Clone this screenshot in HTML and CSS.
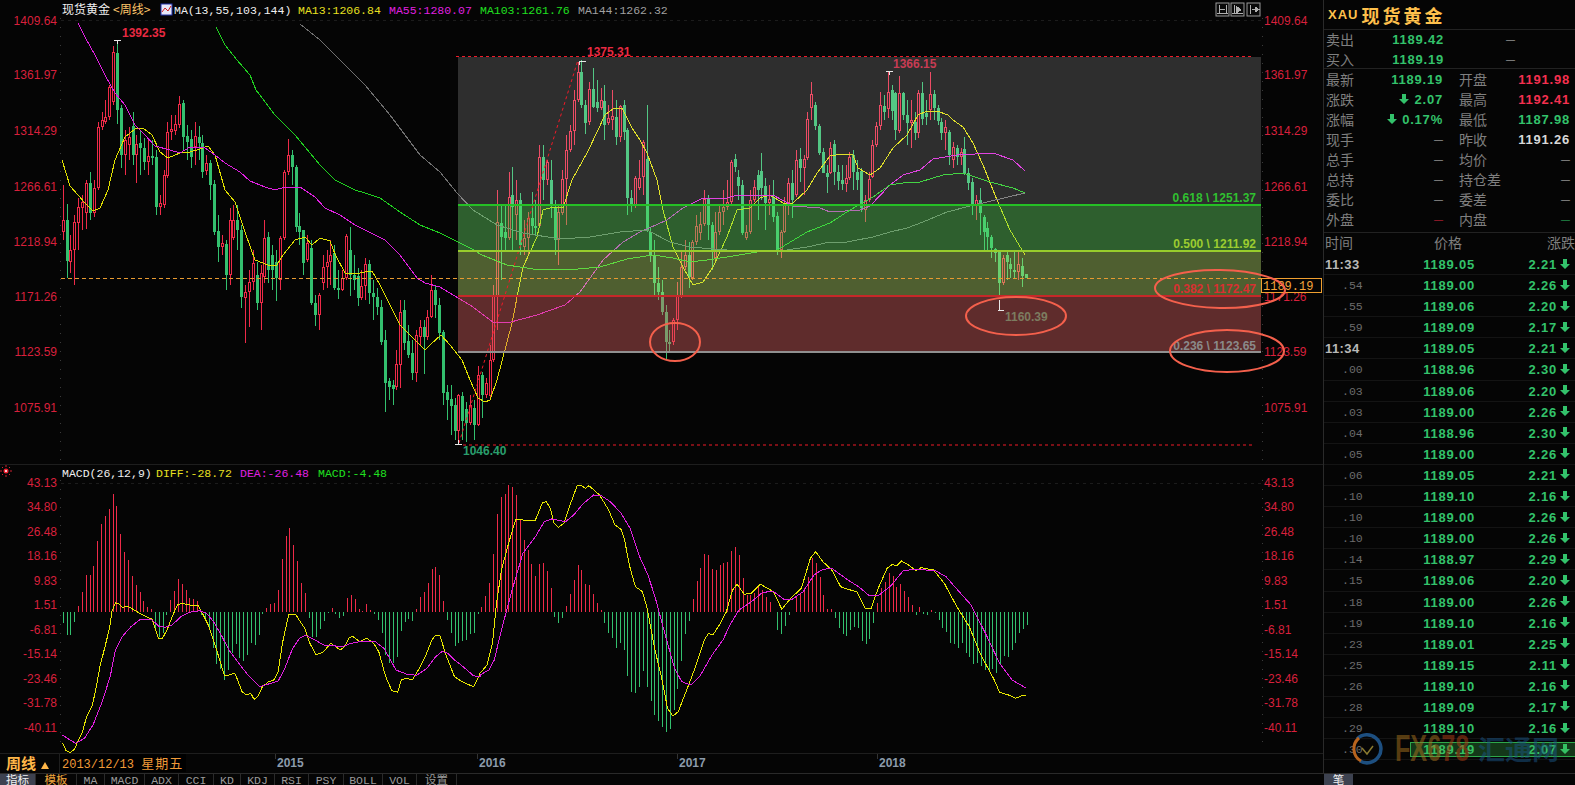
FILE: index.html
```html
<!DOCTYPE html>
<html lang="en">
<head>
  <meta charset="UTF-8" />
  <title>现货黄金 周线</title>
  <link rel="stylesheet" href="styles.css">
</head>
<body>
  <div class="top">
    <div class="charts">
      <svg class="plot" id="plot" width="1323" height="753" viewBox="0 0 1323 753">
        <!-- panel header -->
        <text class="hd cjk white" x="62" y="14">现货黄金</text>
        <text class="hd cjk gold" x="113" y="14">&lt;周线&gt;</text>
        <rect x="161" y="4" width="11" height="11" fill="#e8e8f8" stroke="#2233aa"/>
        <path d="M162 12 L165 8 L168 11 L171 6" fill="none" stroke="#d02020"/>
        <text class="hd white" x="174" y="14">MA(13,55,103,144)</text>
        <text class="hd yellow" x="298" y="14">MA13:1206.84</text>
        <text class="hd magenta" x="389" y="14">MA55:1280.07</text>
        <text class="hd green" x="480" y="14">MA103:1261.76</text>
        <text class="hd gray" x="578" y="14">MA144:1262.32</text>

        <!-- filled by chart.js -->
        <g id="grid"></g>
        <g id="candles"></g>
        <g id="lines"></g>

        <!-- fib bands lie over the candles -->
        <rect class="band-top" x="458" y="57" width="803" height="147"/>
        <rect class="band-618" x="458" y="205" width="803" height="46"/>
        <rect class="band-500" x="458" y="251" width="803" height="45"/>
        <rect class="band-382" x="458" y="296" width="803" height="55"/>
        <path class="dash-red" d="M456 56.5 H1254 M463 445 H1254"/>
        <path class="dash-red" d="M459 443 L578 60"/>
        <path class="dash-orange" d="M61 278.5 H1261"/>
        <path class="fib l618" d="M458 204.5 H1261"/>
        <path class="fib l500" d="M458 251 H1261"/>
        <path class="fib l382" d="M458 295.5 H1261"/>
        <path class="fib l236" d="M458 351.5 H1261"/>

        <text class="fibtext c618" x="1256" y="202" text-anchor="end">0.618 \ 1251.37</text>
        <text class="fibtext c500" x="1256" y="248" text-anchor="end">0.500 \ 1211.92</text>
        <text class="fibtext c382" x="1256" y="293" text-anchor="end">0.382 \ 1172.47</text>
        <text class="fibtext c236" x="1256" y="350" text-anchor="end">0.236 \ 1123.65</text>

        <path class="cross" d="M114 40.5 H121 M117.5 40 V44 M579 61.5 H586 M579.5 61 V65 M886 71.5 H893 M889.5 71 V75 M998 310.5 H1004 M999.5 300 V311 M455 444.5 H462 M458.5 440 V445"/>
        <text class="peak red" x="122" y="37">1392.35</text>
        <text class="peak red" x="587" y="56">1375.31</text>
        <text class="peak rose" x="893" y="68">1366.15</text>
        <text class="peak olive" x="1005" y="321">1160.39</text>
        <text class="peak teal" x="463" y="455">1046.40</text>

        <path class="sep" d="M0 464.5 H1323"/>
        <circle cx="6" cy="471" r="2.5" fill="#f02030"/>
        <circle cx="6" cy="471" r="1" fill="#fff"/>
        <path d="M6 465 V467 M6 475 V477 M0 471 H2 M10 471 H12 M2 467 L3 468 M10 467 L9 468 M2 475 L3 474 M10 475 L9 474" stroke="#d02030" fill="none"/>
        <text class="hd white" x="62" y="477">MACD(26,12,9)</text>
        <text class="hd yellow" x="156" y="477">DIFF:-28.72</text>
        <text class="hd magenta" x="240" y="477">DEA:-26.48</text>
        <text class="hd green" x="318" y="477">MACD:-4.48</text>

        <rect class="last-box" x="1261.5" y="278.5" width="60" height="14"/>
        <text class="hd orange" x="1263" y="290">1189.19</text>

        <g id="ellipses" class="ring">
          <ellipse cx="675" cy="342" rx="25" ry="19"/>
          <ellipse cx="1016" cy="316" rx="50" ry="19"/>
          <ellipse cx="1220" cy="289" rx="65" ry="19" transform="rotate(1 1220 289)"/>
          <ellipse cx="1227" cy="351" rx="57" ry="21"/>
        </g>

        <!-- toolbar glyphs -->
        <g class="tool">
          <rect x="1216" y="3" width="13" height="13"/>
          <path d="M1219 5 V14 M1226 5 V14 M1217 13 H1228 M1220 9 H1225"/>
          <rect x="1231" y="3" width="13" height="13"/>
          <path d="M1234 5 V14 M1232 13 H1243"/>
          <path class="solid" d="M1236 6 L1241 10 L1236 13 Z"/>
          <rect x="1247" y="3" width="13" height="13"/>
          <path d="M1250 5 V14 M1252 9 H1258"/>
          <path class="solid" d="M1255 7 L1259 9.5 L1255 12 Z"/>
        </g>
      </svg>

      <div class="timebar">
        <div class="period">周线<span class="tri"></span></div>
        <div class="date"><span class="date-text">2013/12/13 <span class="cjk">星期五</span></span></div>
        <div class="year y2015">2015</div>
        <div class="year">2016</div>
        <div class="year">2017</div>
        <div class="year">2018</div>
      </div>
    </div>

    <aside class="side">
      <div class="title"><span class="sym">XAU</span><span class="name">现货黄金</span></div>

      <div class="book">
        <div class="book-row"><span class="lbl">卖出</span><span class="num up-g">1189.42</span><span class="dash wide">—</span></div>
        <div class="book-row"><span class="lbl">买入</span><span class="num up-g">1189.19</span><span class="dash wide">—</span></div>
      </div>

      <div class="quote">
        <span class="lbl">最新</span><span class="num up-g">1189.19</span><span class="lbl">开盘</span><span class="num red-n">1191.98</span>
        <span class="lbl">涨跌</span><span class="num up-g"><svg class="arr" viewBox="0 0 10 10"><path d="M3 0H7V5H10L5 10L0 5H3Z"/></svg> 2.07</span><span class="lbl">最高</span><span class="num red-n">1192.41</span>
        <span class="lbl">涨幅</span><span class="num up-g"><svg class="arr" viewBox="0 0 10 10"><path d="M3 0H7V5H10L5 10L0 5H3Z"/></svg> 0.17%</span><span class="lbl">最低</span><span class="num up-g">1187.98</span>
        <span class="lbl">现手</span><span class="dash">—</span><span class="lbl">昨收</span><span class="num white-n">1191.26</span>
        <span class="lbl">总手</span><span class="dash">—</span><span class="lbl">均价</span><span class="dash">—</span>
        <span class="lbl">总持</span><span class="dash">—</span><span class="lbl">持仓差</span><span class="dash">—</span>
        <span class="lbl">委比</span><span class="dash">—</span><span class="lbl">委差</span><span class="dash">—</span>
        <span class="lbl">外盘</span><span class="dash d-red">—</span><span class="lbl">内盘</span><span class="dash d-green">—</span>
      </div>

      <div class="ticks-head"><span class="lbl">时间</span><span class="lbl mid">价格</span><span class="lbl end">涨跌</span></div>
      <div class="ticks" id="ticks"></div>
    </aside>
  </div>

  <div class="tabs">
    <div class="tab tab-on">指标</div>
    <div class="tab tab-gold">模板</div>
    <div class="tab">MA</div>
    <div class="tab">MACD</div>
    <div class="tab">ADX</div>
    <div class="tab">CCI</div>
    <div class="tab">KD</div>
    <div class="tab">KDJ</div>
    <div class="tab">RSI</div>
    <div class="tab">PSY</div>
    <div class="tab">BOLL</div>
    <div class="tab">VOL</div>
    <div class="tab">设置</div>
    <div class="tab-space"></div>
    <div class="tab tab-on tab-side">笔</div>
  </div>

  <div class="watermark">
    <svg class="wm-logo" viewBox="0 0 32 32" width="32" height="32">
      <path d="M6 6 A14 14 0 1 1 9 28" fill="none" stroke="#1d4f80" stroke-width="3.5"/>
      <path d="M8 5 A14 14 0 0 0 10 28" fill="none" stroke="#b8641e" stroke-width="3"/>
      <path d="M11 15 L16 21 L22 13" fill="none" stroke="#8a7a30" stroke-width="1.5"/>
    </svg>
    <span class="wm-fx"><span class="wm-a">FX6</span><span class="wm-b">78</span></span>
    <span class="wm-cn">汇通网</span>
  </div>

  <script src="chart.js"></script>
</body>
</html>
```

FILE: styles.css
```css
* {
  box-sizing: border-box;
}

html, body {
  margin: 0;
  padding: 0;
  height: 785px;
  overflow: hidden;
  background: #050505;
}

body {
  font-family: "Liberation Sans", "Noto Sans CJK SC", sans-serif;
  color: #ccc;
  position: relative;
}

.top {
  display: flex;
  height: 773px;
}

.charts {
  width: 1323px;
  flex: none;
}

.plot {
  display: block;
}

/* chart header text */
.hd {
  font-family: "Liberation Mono", "Noto Sans CJK SC", monospace;
  font-size: 11.5px;
}

.cjk {
  font-family: "Noto Sans CJK SC", sans-serif;
  font-size: 12px;
}

.white { fill: #f0f0f0; }
.gold { fill: #ffc66a; }
.yellow { fill: #e8e020; }
.magenta { fill: #e020e0; }
.green { fill: #20e020; }
.gray { fill: #a0a0a0; }
.orange { fill: #f6a53c; font-size: 12px; }

.axis {
  font-size: 12px;
  fill: #d8203c;
}

.axis-line {
  stroke: #3a3a3a;
  stroke-dasharray: 1 8;
  fill: none;
}

.grid-line {
  stroke: #1c1c1c;
  stroke-dasharray: 3 4;
  fill: none;
}

.sep {
  stroke: #1e1e1e;
  fill: none;
}

.wick, .body {
  shape-rendering: crispEdges;
}

.ma {
  fill: none;
  stroke-width: 1;
  shape-rendering: crispEdges;
}

.band-top { fill: rgba(233, 233, 233, 0.18); }
.band-618 { fill: rgba(107, 230, 107, 0.4); }
.band-500 { fill: rgba(190, 230, 112, 0.4); }
.band-382 { fill: rgba(230, 102, 102, 0.4); }

.dash-red {
  stroke: #f01a28;
  stroke-dasharray: 3 3;
  fill: none;
}

.dash-orange {
  stroke: #e89a30;
  stroke-dasharray: 4 3;
  fill: none;
}

.fib {
  stroke-width: 2;
  fill: none;
  shape-rendering: crispEdges;
}

.l618 { stroke: #25c025; }
.l500 { stroke: #98cc2c; }
.l382 { stroke: #c62828; }
.l236 { stroke: #909090; }

.fibtext {
  font-size: 12px;
  font-weight: bold;
}

.c618 { fill: #30c030; }
.c500 { fill: #9ccc30; }
.c382 { fill: #d83030; }
.c236 { fill: #8a8a8a; }

.cross {
  stroke: #e8e8e8;
  fill: none;
  shape-rendering: crispEdges;
}

.peak {
  font-size: 12px;
  font-weight: bold;
}

.peak.red { fill: #e82a42; }
.peak.rose { fill: #c83c54; }
.peak.olive { fill: #7c7c60; }
.peak.teal { fill: #2a9e6c; }

.ring ellipse {
  fill: none;
  stroke: #f4604c;
  stroke-width: 2;
}

.last-box {
  fill: #050505;
  stroke: #f0a030;
}

.tool rect {
  fill: #0a0a0a;
  stroke: #9a9a9a;
}

.tool path {
  stroke: #b0b0b0;
  fill: none;
  shape-rendering: crispEdges;
}

.tool path.solid {
  fill: #b0b0b0;
}

/* bar under the charts */
.timebar {
  display: flex;
  height: 20px;
  border-top: 1px solid #1e1e1e;
}

.period {
  width: 60px;
  flex: none;
  padding-left: 6px;
  font-size: 15px;
  font-weight: bold;
  line-height: 18px;
  color: #ffb648;
  border-right: 1px solid #1e1e1e;
  font-family: "Noto Sans CJK SC", sans-serif;
}

.tri {
  display: inline-block;
  margin-left: 5px;
  border-left: 4px solid transparent;
  border-right: 4px solid transparent;
  border-bottom: 7px solid #ffb648;
}

.date {
  width: 215px;
  flex: none;
}

.date-text {
  display: inline-block;
  height: 18px;
  padding: 0 3px 0 2px;
  background: #000;
  font-family: "Liberation Mono", monospace;
  font-size: 12px;
  line-height: 18px;
  color: #f09a38;
}

.date-text .cjk {
  font-size: 13px;
  letter-spacing: 1px;
}

.year {
  width: 200px;
  flex: none;
  padding: 2px 0 0 2px;
  font-size: 12px;
  font-weight: bold;
  color: #8c9bab;
  background: linear-gradient(#333, #333) left top / 1px 5px no-repeat;
}

.y2015 {
  width: 202px;
}

/* right panel */
.side {
  width: 252px;
  flex: none;
  border-left: 1px solid #2a2a2a;
  overflow: hidden;
}

.title {
  display: flex;
  align-items: center;
  gap: 3px;
  height: 30px;
  padding-left: 4px;
  border-bottom: 1px solid #222;
  color: #ffc04c;
}

.sym {
  font-size: 13px;
  font-weight: bold;
  letter-spacing: 1px;
}

.name {
  font-family: "Noto Sans CJK SC", sans-serif;
  font-size: 18px;
  font-weight: bold;
  letter-spacing: 3px;
}

.lbl {
  font-family: "Noto Sans CJK SC", sans-serif;
  font-size: 14px;
  line-height: 18px;
  color: #7f7f7f;
  white-space: nowrap;
}

.num {
  font-size: 13px;
  font-weight: bold;
  line-height: 20px;
  letter-spacing: 0.8px;
  text-align: right;
  white-space: nowrap;
}

.up-g { color: #33c26b; }
.red-n { color: #f5304f; }
.white-n { color: #d8d8d8; }

.dash {
  font-size: 9px;
  line-height: 20px;
  color: #c8c8c8;
  text-align: right;
}

.d-red { color: #e02840; }
.d-green { color: #2ebb66; }

.arr {
  width: 10px;
  height: 10px;
  margin-right: 1px;
  fill: #33c26b;
}

.book {
  height: 39px;
  padding-left: 2px;
  border-bottom: 1px solid #222;
}

.book-row {
  display: grid;
  grid-template-columns: 118px 71px;
  height: 20px;
}

.book-row .lbl {
  grid-column: 1;
  grid-row: 1;
}

.book-row .num {
  grid-column: 1;
  grid-row: 1;
  text-align: right;
}

.book-row .wide {
  grid-column: 2;
  grid-row: 1;
}

.quote {
  display: grid;
  grid-template-columns: 28px 89px 46px 1fr;
  grid-auto-rows: 20px;
  height: 164px;
  padding: 1px 5px 0 2px;
  border-bottom: 1px solid #222;
}

.quote > .lbl:nth-child(4n + 3) {
  padding-left: 16px;
}

.ticks-head {
  display: grid;
  grid-template-columns: 1fr 1fr 1fr;
  height: 21px;
  padding: 0 0 0 1px;
}

.ticks-head .mid { text-align: center; padding-right: 4px; }
.ticks-head .end { text-align: right; }

.tick-row {
  display: grid;
  grid-template-columns: 50px 101px 82px 18px;
  position: relative;
  height: 21.1px;
  align-items: center;
  border-bottom: 1px solid #141414;
}

.t-time {
  padding-left: 1px;
  font-size: 13px;
  font-weight: bold;
  color: #b8b8b8;
  letter-spacing: 0.4px;
}

.t-sec {
  padding-left: 18px;
  font-family: "Liberation Mono", monospace;
  font-size: 11.5px;
  color: #6c6c6c;
}

.tick-row .num {
  line-height: 21px;
}

.tick-row .arr {
  margin: 0 0 2px 3px;
}

.cur-box {
  position: absolute;
  left: 86px;
  top: 3px;
  width: 166px;
  height: 15px;
  background: rgba(60, 190, 80, 0.28);
  border: 1px solid #2ea84a;
}

/* bottom tabs */
.tabs {
  display: flex;
  height: 12px;
  border-top: 1px solid #2a2a2a;
  overflow: hidden;
}

.tab {
  flex: none;
  width: 34px;
  font-family: "Liberation Mono", "Noto Sans CJK SC", monospace;
  font-size: 11.5px;
  line-height: 13px;
  text-align: center;
  color: #9a9a9a;
  border-right: 1px solid #2a2a2a;
}

.tab:nth-child(1) { width: 36px; }
.tab:nth-child(2) { width: 41px; }
.tab:nth-child(3) { width: 28px; }
.tab:nth-child(4) { width: 40px; }
.tab:nth-child(6) { width: 35px; }
.tab:nth-child(7) { width: 27px; }
.tab:nth-child(10) { width: 35px; }
.tab:nth-child(11) { width: 39px; }
.tab:nth-child(13) { width: 40px; }

.tab-on {
  background: #3d4250;
  color: #f0f0f0;
}

.tab-gold {
  color: #f0a63c;
}

.tab-space {
  width: 867px;
  flex: none;
}

.tab.tab-side {
  width: 29px;
  border-right: 0;
}

/* watermark over the last tick rows */
.watermark {
  position: absolute;
  left: 1351px;
  top: 733px;
  display: flex;
  align-items: center;
  pointer-events: none;
}

.wm-fx {
  display: block;
  width: 83px;
  margin-left: 12px;
  font-size: 37px;
  line-height: 32px;
  font-weight: bold;
  white-space: nowrap;
  transform: scaleX(0.68);
  transform-origin: left center;
}

.wm-a { color: rgba(170, 115, 30, 0.5); }
.wm-b { color: rgba(170, 60, 20, 0.55); }

.wm-cn {
  font-family: "Noto Sans CJK SC", sans-serif;
  font-size: 27px;
  line-height: 32px;
  font-weight: bold;
  color: rgba(25, 85, 135, 0.5);
}
```

FILE: chart.js
```js
const SVG_NS = "http://www.w3.org/2000/svg";
const RED = "#ee2a48";
const GREEN = "#33c06e";

function el(name, attrs, parent, text) {
  const node = document.createElementNS(SVG_NS, name);
  for (const k in attrs) node.setAttribute(k, attrs[k]);
  if (text) node.textContent = text;
  parent.appendChild(node);
  return node;
}

// color, body top, body bottom, wick top, wick bottom (y pixels)
const candles = [
  ["r",220,232,185,240],["g",220,261,204,278],["r",250,262,235,273],["r",222,250,215,285],["r",207,223,198,250],
  ["r",202,208,195,230],["r",183,213,180,229],["g",183,213,172,220],["r",188,213,180,217],["r",127,188,122,190],
  ["r",120,127,112,130],["r",117,122,100,124],["r",87,117,85,120],["r",52,102,46,105],["g",53,110,40,124],
  ["g",108,155,105,168],["r",140,155,130,175],["r",137,145,127,160],["g",126,155,112,165],["r",144,155,135,183],
  ["g",143,148,130,175],["g",148,162,138,170],["r",156,162,140,175],["g",156,158,140,165],["g",157,207,150,215],
  ["r",203,207,195,215],["r",175,205,170,208],["r",132,176,122,178],["r",129,132,115,140],["r",124,131,115,135],
  ["r",104,125,96,128],["g",103,137,100,150],["g",136,142,125,160],["g",139,157,130,168],["r",136,147,122,165],
  ["g",137,143,126,160],["g",143,172,135,178],["r",163,171,155,175],["g",163,185,160,200],["g",184,232,180,235],
  ["g",231,247,215,262],["r",243,247,235,255],["g",244,275,240,290],["r",220,275,208,285],["r",220,238,205,240],
  ["g",220,230,205,250],["g",230,297,225,308],["r",292,298,285,343],["r",282,292,270,327],["r",263,282,250,290],
  ["g",275,303,262,310],["r",273,303,265,330],["r",238,277,220,283],["g",237,270,232,283],["g",255,270,245,290],
  ["g",262,278,250,301],["r",238,280,236,290],["r",172,238,170,240],["r",155,172,139,175],["g",155,167,150,185],
  ["g",167,227,165,232],["g",226,232,213,245],["g",230,263,230,275],["r",243,260,235,262],["g",248,303,240,305],
  ["g",303,315,295,326],["r",295,315,293,330],["r",267,283,255,290],["r",262,267,250,288],["r",255,262,240,285],
  ["g",253,288,245,290],["g",288,290,270,299],["r",278,290,270,291],["r",236,278,234,280],["g",250,275,227,296],
  ["g",275,280,255,290],["g",276,298,268,306],["r",286,298,270,300],["r",264,286,258,300],["g",264,293,260,304],
  ["g",293,297,280,320],["g",297,307,288,315],["g",307,342,300,345],["g",340,383,330,412],["g",381,387,378,400],
  ["g",385,389,380,405],["r",364,387,350,390],["r",312,365,300,388],["g",310,343,300,350],["g",341,355,325,358],
  ["g",353,373,340,380],["r",335,373,330,382],["r",327,337,320,345],["g",327,337,320,374],["r",317,337,310,340],
  ["r",290,317,275,318],["g",290,305,285,318],["g",305,333,298,340],["g",332,393,330,405],["g",392,400,385,420],
  ["g",399,406,385,435],["g",405,431,398,440],["r",395,431,394,444],["g",396,421,392,440],["g",409,423,402,442],
  ["r",405,423,395,425],["g",408,425,400,440],["r",375,425,366,426],["g",375,395,372,418],["r",383,395,378,398],
  ["r",360,396,345,398],["r",296,360,285,362],["r",222,296,190,330],["g",223,237,205,280],["g",232,238,205,250],
  ["r",197,238,172,240],["g",195,207,167,250],["r",200,215,180,240],["g",200,245,193,255],["r",238,247,220,255],
  ["r",218,238,212,255],["g",218,226,192,235],["g",226,228,200,235],["r",157,226,145,228],["g",157,180,145,200],
  ["r",162,180,160,185],["g",180,205,160,218],["g",207,240,200,255],["r",212,240,205,265],["r",179,213,170,215],
  ["r",150,179,135,225],["r",131,150,125,152],["r",100,131,90,145],["r",72,100,62,102],["g",72,105,60,108],
  ["g",105,123,100,134],["r",89,122,82,125],["g",89,107,68,108],["g",102,108,80,112],["r",100,108,88,110],
  ["g",101,125,85,140],["r",118,123,105,125],["r",116,120,90,130],["g",117,137,100,145],["r",106,137,105,142],
  ["g",105,132,100,140],["g",130,198,128,215],["g",198,206,190,212],["r",178,206,176,208],["r",178,188,160,190],
  ["r",142,177,140,195],["g",159,230,105,232],["g",232,255,228,262],["g",255,283,240,295],["g",283,292,267,300],
  ["g",292,312,280,315],["g",312,342,305,360],["g",342,343,330,352],["r",320,342,318,345],["r",296,320,282,330],
  ["r",267,296,250,298],["r",255,267,240,270],["g",255,277,242,288],["r",242,278,240,280],["r",226,242,215,245],
  ["r",224,233,212,240],["r",199,224,190,226],["g",199,225,195,240],["g",225,250,222,270],["r",232,258,212,260],
  ["r",212,232,205,235],["r",207,212,190,225],["r",202,207,180,210],["r",162,202,160,204],["g",159,167,154,172],
  ["g",177,186,170,200],["g",185,233,180,235],["r",232,238,225,240],["r",200,232,190,234],["r",187,200,180,202],
  ["g",175,190,170,220],["g",171,188,153,200],["g",186,203,178,230],["r",199,203,185,215],["g",197,217,180,222],
  ["g",216,250,212,255],["r",232,250,230,258],["r",203,232,197,233],["r",183,203,178,215],["g",183,200,170,218],
  ["r",160,195,150,197],["g",159,168,148,182],["r",159,168,155,195],["r",119,158,112,160],["r",94,108,82,120],
  ["g",105,126,102,130],["g",126,153,124,155],["g",152,173,148,160],["g",173,177,165,193],["r",148,173,142,174],
  ["g",144,172,140,185],["g",172,181,165,190],["g",180,184,165,190],["r",178,184,165,192],["r",157,178,152,180],
  ["g",155,172,150,190],["g",172,180,160,190],["g",171,208,168,212],["r",200,210,195,222],["r",179,200,172,202],
  ["r",145,177,140,178],["r",126,145,122,147],["r",105,126,92,130],["g",106,112,95,120],["r",92,109,72,118],
  ["g",90,111,85,120],["g",93,130,92,140],["r",93,131,76,133],["g",93,115,92,120],["g",115,123,100,145],
  ["r",120,123,100,148],["g",122,133,112,140],["r",93,133,90,138],["g",93,119,82,125],["g",113,117,100,125],
  ["r",94,110,72,120],["g",94,108,90,120],["g",108,121,105,125],["g",122,133,118,140],["r",127,133,120,150],
  ["g",132,155,130,165],["r",147,160,142,168],["g",148,157,145,165],["r",152,157,148,165],["g",149,173,137,175],
  ["g",173,183,168,190],["g",182,205,178,215],["r",200,205,195,220],["g",200,213,188,235],["g",217,232,215,250],
  ["g",228,237,222,250],["g",237,248,235,258],["g",249,253,248,262],["g",252,283,250,296],["r",258,283,255,285],
  ["g",255,262,250,280],["g",264,269,258,278],["g",270,272,252,278],["r",264,272,252,280],["g",266,276,258,287],
  ["g",274,278,274,278]
];

// MACD histogram, height in px*3, positive is red
const bars = [-35,-70,-70,-30,17,60,110,110,137,212,263,288,308,353,317,233,179,155,107,80,59,33,15,7,-50,-75,-63,-10,35,62,98,83,65,42,38,32,
  -10,-20,-48,-110,-157,-172,-205,-175,-125,-97,-138,-148,-130,-95,-100,-70,-7,10,23,25,65,158,227,250,200,152,85,57,-20,-75,-77,-51,-28,-5,10,-8,-18,-13,
  40,50,39,8,2,23,5,-8,-25,-63,-130,-153,-155,-135,-57,-30,-23,-28,8,45,60,87,127,135,110,32,-25,-63,-102,-93,-87,-85,-67,-63,-7,
  15,47,85,173,293,343,353,380,373,350,277,215,185,143,107,143,145,122,72,-15,-35,-18,17,53,95,140,125,83,80,53,27,5,
  -35,-65,-80,-108,-95,-115,-193,-240,-245,-227,-178,-227,-267,-310,-327,-345,-360,-352,-295,-233,-148,-67,-28,
  38,92,130,173,170,127,125,140,145,148,182,193,170,102,50,50,57,75,65,45,30,-2,-55,-67,-43,-10,-1,
  45,53,70,105,160,147,105,50,7,8,-20,-48,-67,-73,-55,-45,-48,-87,-97,-82,-35,
  27,70,90,115,107,75,83,62,45,20,-10,15,-7,-10,5,-3,-25,-48,-60,-93,-97,-108,-95,-125,-135,-158,-155,-163,-175,-177,-173,-185,-158,-133,-135,-115,-93,-65,-53,-40];

const maLines = [
  { color: "#e0e000", pts: [[62,160],[70,186],[78,195],[85,203],[93,211],[100,208],[108,190],[115,160],[125,137],[135,129],[143,128],[152,135],[160,152],[168,158],[180,153],[190,152],[200,149],[208,146],[215,155],[225,190],[235,202],[245,232],[255,260],[268,265],[277,265],[283,255],[295,240],[305,237],[312,245],[320,238],[330,241],[335,254],[345,273],[355,274],[365,272],[372,271],[380,285],[390,305],[400,325],[415,340],[425,350],[430,345],[441,335],[450,345],[462,360],[470,380],[478,398],[485,402],[490,400],[497,380],[512,323],[523,267],[537,237],[543,210],[553,207],[563,208],[572,180],[587,153],[598,130],[605,115],[613,109],[622,108],[632,128],[640,140],[647,153],[657,180],[663,210],[673,247],[683,267],[693,285],[703,282],[713,267],[727,237],[737,210],[750,208],[760,198],[770,195],[783,203],[793,203],[807,190],[817,173],[830,156],[843,154],[853,155],[858,168],[870,175],[880,168],[893,148],[907,135],[918,115],[927,111],[937,111],[948,115],[953,120],[963,127],[973,143],[983,165],[997,200],[1010,230],[1025,255]] },
  { color: "#e020e0", pts: [[78,23],[85,37],[95,55],[105,75],[115,93],[125,105],[135,125],[145,135],[155,146],[170,150],[180,153],[190,147],[205,148],[215,155],[225,163],[240,172],[250,181],[265,187],[275,190],[285,187],[300,187],[315,197],[325,208],[340,215],[355,225],[365,230],[385,240],[400,255],[417,278],[425,283],[440,287],[458,298],[470,305],[493,322],[507,323],[537,315],[565,305],[580,292],[603,260],[623,242],[640,232],[667,220],[683,208],[703,198],[727,198],[737,195],[773,195],[793,206],[820,208],[830,212],[860,210],[870,206],[890,185],[903,175],[920,170],[933,159],[957,155],[993,153],[1013,160],[1025,171]] },
  { color: "#20d020", pts: [[216,27],[225,45],[237,60],[250,75],[256,90],[275,115],[295,135],[320,165],[335,180],[355,190],[365,193],[380,198],[400,212],[420,225],[440,233],[470,248],[482,255],[507,265],[533,269],[567,270],[600,267],[627,259],[653,255],[673,258],[690,262],[707,260],[727,257],[757,252],[777,250],[807,232],[830,223],[850,210],[873,197],[890,185],[903,183],[920,182],[943,175],[963,173],[990,182],[1013,188],[1025,193]] },
  { color: "#707070", pts: [[300,24],[320,40],[340,60],[365,85],[390,115],[420,155],[440,172],[457,193],[473,210],[497,225],[523,233],[560,239],[590,237],[620,232],[647,230],[670,242],[690,247],[727,250],[773,252],[807,247],[830,242],[847,242],[873,237],[890,232],[907,228],[923,222],[947,212],[970,206],[987,202],[1025,193]] }
];

// lines of the lower panel, read in two stretches of the chart
const difA = [[181,788],[192,812],[204,818],[216,808],[228,780],[240,755],[250,715],[268,675],[278,630],[290,560],[305,500],[318,445],[325,395],[335,368],[345,372],[355,382],[372,379],[390,390],[405,400],[425,410],[442,418],[450,445],[460,475],[472,475],[485,450],[500,410],[515,375],[530,370],[550,375],[575,376],[590,405],[605,435],[620,480],[635,530],[652,588],[665,585],[682,580],[690,600],[703,635],[715,645],[728,640],[738,658],[750,648],[762,620],[780,605],[795,600],[808,575],[820,490],[838,405],[858,403],[875,430],[885,445],[900,490],[918,525],[940,515],[960,490],[975,500],[988,510],[1000,500],[1015,472],[1025,470],[1045,485],[1065,475],[1085,490],[1100,515],[1120,590],[1138,632],[1155,637],[1165,600],[1180,594],[1197,600],[1215,570],[1235,530],[1255,478],[1265,466],[1278,468],[1295,525],[1320,590],[1345,607],[1375,620],[1390,590]];
const difB = [[0,580],[20,555],[35,490],[45,380],[60,270],[80,190],[100,118],[120,120],[155,120],[175,68],[185,65],[197,85],[207,128],[220,142],[235,130],[252,75],[272,18],[285,17],[295,25],[305,17],[335,45],[360,90],[378,135],[395,148],[405,180],[418,255],[435,320],[455,335],[468,385],[490,510],[510,600],[525,685],[540,708],[555,695],[575,640],[600,570],[628,480],[640,460],[652,465],[670,435],[690,395],[707,330],[720,313],[740,343],[760,340],[785,313],[822,335],[845,388],[870,355],[900,325],[925,235],[940,215],[960,245],[985,270],[1010,320],[1030,328],[1055,335],[1078,385],[1095,385],[1115,325],[1140,265],[1155,253],[1167,258],[1180,243],[1200,255],[1220,272],[1235,263],[1270,270],[1300,310],[1335,380],[1370,440],[1400,520],[1440,600],[1455,637],[1480,645],[1500,655],[1515,648],[1530,647]];
const deaA = [[181,765],[200,778],[220,790],[245,775],[270,735],[295,670],[320,590],[335,510],[355,470],[380,440],[405,420],[440,418],[460,438],[480,442],[500,435],[525,410],[550,397],[580,392],[600,400],[620,425],[645,470],[665,510],[690,545],[720,585],[755,620],[780,612],[808,603],[825,570],[850,505],[870,475],[888,466],[915,480],[940,495],[965,497],[995,500],[1020,490],[1045,485],[1090,485],[1115,505],[1150,570],[1180,582],[1210,586],[1240,565],[1265,530],[1285,514],[1300,520],[1320,540],[1345,560],[1375,587],[1394,590]];
const deaB = [[0,585],[25,570],[40,540],[60,450],[90,330],[120,220],[155,170],[180,125],[200,117],[240,125],[262,105],[290,70],[318,45],[340,47],[365,65],[395,100],[420,145],[445,225],[470,285],[490,350],[520,470],[545,565],[565,605],[590,615],[615,590],[650,525],[680,480],[700,435],[725,390],[760,365],[790,338],[820,333],[850,357],[875,357],[905,335],[935,285],[960,268],[985,265],[1030,300],[1060,320],[1090,347],[1115,347],[1150,318],[1185,272],[1220,268],[1275,272],[1305,290],[1325,315],[1375,375],[1420,470],[1455,550],[1490,600],[1530,625]];

function macdPoints(a, b) {
  const left = a.map(p => [p[0] / 2.904, 480 + p[1] / 3]);
  const right = b.map(p => [480 + p[0] / 2.8, 480 + p[1] / 3]);
  return left.concat(right);
}

function toPath(pts) {
  return pts.map(p => p[0].toFixed(1) + "," + p[1].toFixed(1)).join(" ");
}

function candleX(i) {
  return Math.round(i <= 111 ? 62.7 + 3.88 * i : 493.3 + 3.83 * (i - 111));
}

function drawCandles() {
  const g = document.getElementById("candles");
  candles.forEach((c, i) => {
    const x = candleX(i);
    const col = c[0] === "r" ? RED : GREEN;
    el("rect", { class: "wick", x: x, y: c[3], width: 1, height: c[4] - c[3], fill: col }, g);
    el("rect", {
      class: "body", x: x - 0.5, y: c[1] + 0.5, width: 2, height: Math.max(c[2] - c[1] - 1, 1),
      fill: c[0] === "r" ? "#050505" : col, stroke: col
    }, g);
  });
}

function drawLines() {
  const g = document.getElementById("lines");
  maLines.forEach(l => el("polyline", { class: "ma", points: toPath(l.pts), stroke: l.color }, g));

  const barStep = (1027 - 62.7) / (bars.length - 1);
  bars.forEach((h, i) => {
    const x = Math.round(62.7 + barStep * i);
    const px = Math.abs(h) / 3;
    el("rect", {
      class: "wick", x: x, y: h > 0 ? 611.5 - px : 611.5, width: 1, height: px, fill: h > 0 ? RED : GREEN
    }, g);
  });
  el("polyline", { class: "ma", points: toPath(macdPoints(difA, difB)), stroke: "#e8e800" }, g);
  el("polyline", { class: "ma", points: toPath(macdPoints(deaA, deaB)), stroke: "#e020e0" }, g);
}

function drawAxes() {
  const g = document.getElementById("grid");
  const upper = [["1409.64",21],["1361.97",75],["1314.29",131],["1266.61",187],["1218.94",242],["1171.26",297],["1123.59",352],["1075.91",408]];
  const lower = [["43.13",483],["34.80",507],["26.48",532],["18.16",556],["9.83",581],["1.51",605],["-6.81",630],["-15.14",654],["-23.46",679],["-31.78",703],["-40.11",728]];
  upper.concat(lower).forEach(a => {
    el("text", { class: "axis", x: 57, y: a[1] + 4, "text-anchor": "end" }, g, a[0]);
    el("text", { class: "axis", x: 1264, y: a[1] + 4 }, g, a[0]);
  });
  el("path", { class: "axis-line", d: "M60.5 18 V462 M60.5 480 V750 M1262.5 18 V462 M1262.5 480 V750" }, g);
  el("path", { class: "grid-line", d: "M61 20.5 H1261 M61 483.5 H1261" }, g);
}

const tickData = [
  ["11:33","1189.05","2.21"],[".54","1189.00","2.26"],[".55","1189.06","2.20"],[".59","1189.09","2.17"],
  ["11:34","1189.05","2.21"],[".00","1188.96","2.30"],[".03","1189.06","2.20"],[".03","1189.00","2.26"],
  [".04","1188.96","2.30"],[".05","1189.00","2.26"],[".06","1189.05","2.21"],[".10","1189.10","2.16"],
  [".10","1189.00","2.26"],[".10","1189.00","2.26"],[".14","1188.97","2.29"],[".15","1189.06","2.20"],
  [".18","1189.00","2.26"],[".19","1189.10","2.16"],[".23","1189.01","2.25"],[".25","1189.15","2.11"],
  [".26","1189.10","2.16"],[".28","1189.09","2.17"],[".29","1189.10","2.16"],[".30","1189.19","2.07"]
];

function renderTicks() {
  const box = document.getElementById("ticks");
  tickData.forEach((t, i) => {
    const row = document.createElement("div");
    row.className = "tick-row";
    const timeClass = t[0][0] === "." ? "t-sec" : "t-time";
    row.innerHTML = `
      <span class="${timeClass}">${t[0]}</span>
      <span class="num up-g">${t[1]}</span>
      <span class="num up-g">${t[2]}</span>
      <svg class="arr" viewBox="0 0 10 10"><path d="M3 0H7V5H10L5 10L0 5H3Z"/></svg>
      ${i === tickData.length - 1 ? '<div class="cur-box"></div>' : ""}`;
    box.appendChild(row);
  });
}

drawAxes();
drawCandles();
drawLines();
renderTicks();
```
